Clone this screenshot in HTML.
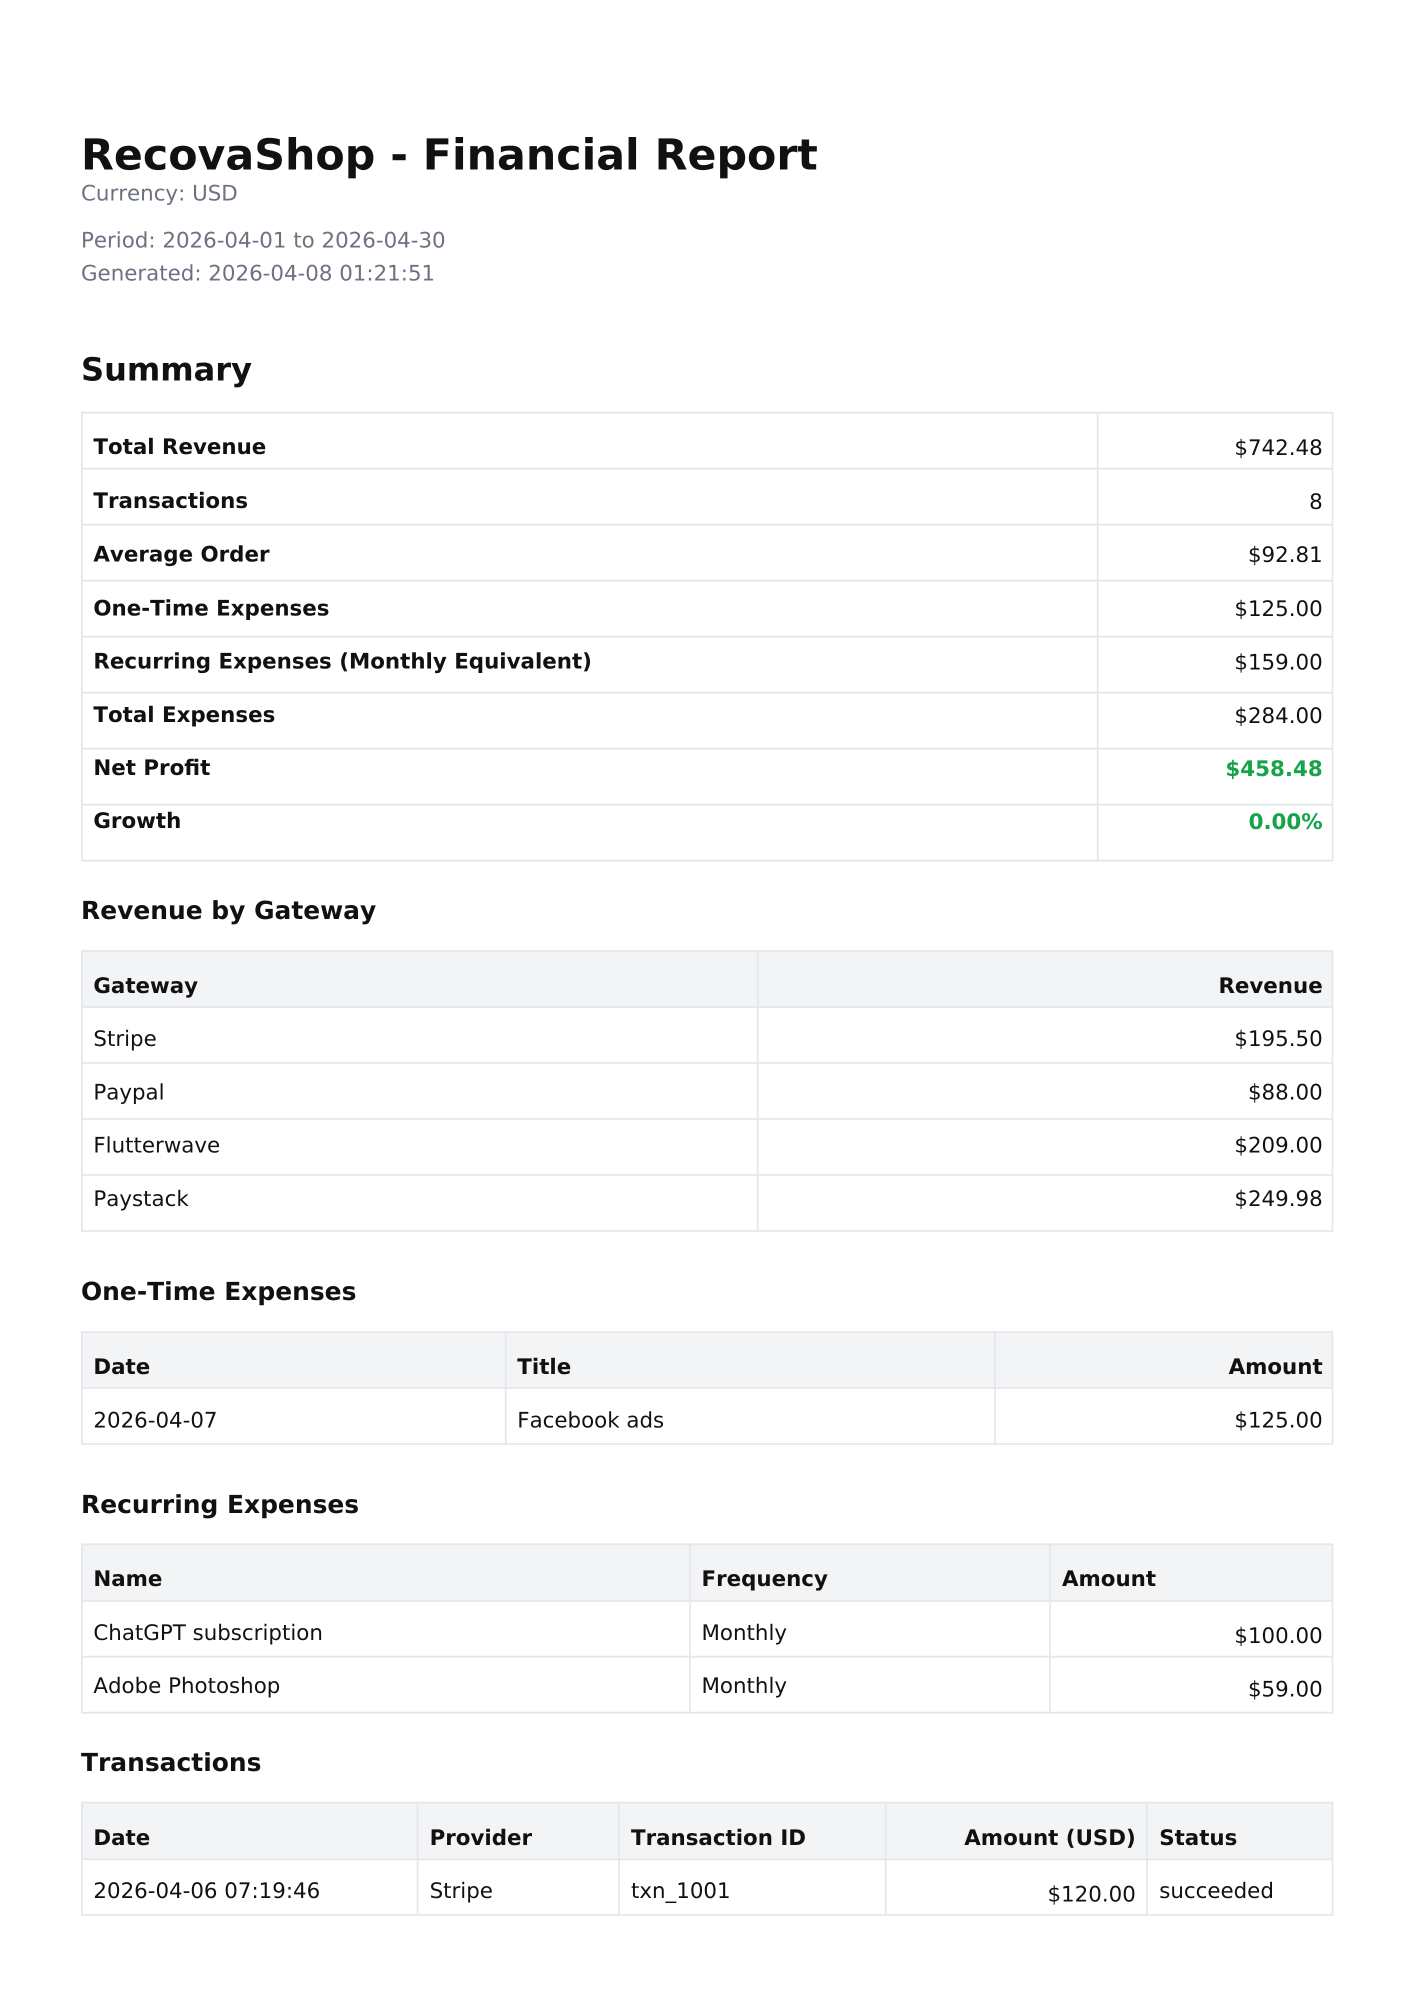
<!DOCTYPE html>
<html lang="en">
<head>
<meta charset="utf-8">
<title>RecovaShop - Financial Report</title>
<style>
html,body{margin:0;padding:0;background:#fff}
svg{display:block}
text{font-family:"DejaVu Sans",sans-serif;font-size:21.37px;fill:#111;text-rendering:geometricPrecision;font-kerning:none}
.b{font-weight:700}
.m{fill:#6b7280}
.r{text-anchor:end}
.g{fill:#16a34a;font-weight:700}
.h1{font-size:42.73px;font-weight:700}
.h2{font-size:32.05px;font-weight:700}
.h3{font-size:24.93px;font-weight:700}
.l{stroke:#e5e7eb;stroke-width:1.78;fill:none}
.th{fill:#f3f4f6}
</style>
</head>
<body>
<svg xmlns="http://www.w3.org/2000/svg" width="1414" height="2000" viewBox="0 0 1414 2000">
<rect width="1414" height="2000" fill="#fff"/>

<text class="h1" x="81" y="169.3">RecovaShop - Financial Report</text>
<text class="m" x="81" y="200.3">Currency: USD</text>
<text class="m" x="81" y="247.3">Period: 2026-04-01 to 2026-04-30</text>
<text class="m" x="81" y="280.7">Generated: 2026-04-08 01:21:51</text>
<text class="h2" x="81" y="380.4">Summary</text>

<path class="l" d="M81.9 412.7H1332.5V860.7H81.9ZM81 468.7H1333M81 524.7H1333M81 580.7H1333M81 636.7H1333M81 692.7H1333M81 748.7H1333M81 804.7H1333M1097.7 412V861"/>
<text class="b" x="93.4" y="454">Total Revenue</text>
<text class="b" x="93.4" y="508">Transactions</text>
<text class="b" x="93.4" y="561.3">Average Order</text>
<text class="b" x="93.4" y="615.3">One-Time Expenses</text>
<text class="b" x="93.4" y="668.4">Recurring Expenses (Monthly Equivalent)</text>
<text class="b" x="93.4" y="722">Total Expenses</text>
<text class="b" x="93.4" y="775.1">Net Profit</text>
<text class="b" x="93.4" y="828">Growth</text>
<text class="r" x="1322.7" y="455">$742.48</text>
<text class="r" x="1322.7" y="509">8</text>
<text class="r" x="1322.7" y="562">$92.81</text>
<text class="r" x="1322.7" y="616">$125.00</text>
<text class="r" x="1322.7" y="669.4">$159.00</text>
<text class="r" x="1322.7" y="723">$284.00</text>
<text class="r g" x="1322.7" y="776">$458.48</text>
<text class="r g" x="1322.7" y="829">0.00%</text>

<text class="h3" x="81" y="919">Revenue by Gateway</text>
<rect class="th" x="81.9" y="951" width="1250.6" height="56"/>
<path class="l" d="M81.9 951H1332.5V1231H81.9ZM81 1007H1333M81 1063H1333M81 1119H1333M81 1175H1333M757.7 950V1232"/>
<text class="b" x="93.4" y="992.8">Gateway</text>
<text class="b r" x="1322.7" y="992.8">Revenue</text>
<text x="93.4" y="1046">Stripe</text><text class="r" x="1322.7" y="1046">$195.50</text>
<text x="93.4" y="1099.7">Paypal</text><text class="r" x="1322.7" y="1099.7">$88.00</text>
<text x="93.4" y="1152.7">Flutterwave</text><text class="r" x="1322.7" y="1152.7">$209.00</text>
<text x="93.4" y="1206.2">Paystack</text><text class="r" x="1322.7" y="1206.2">$249.98</text>

<text class="h3" x="81" y="1300">One-Time Expenses</text>
<rect class="th" x="81.9" y="1332" width="1250.6" height="56"/>
<path class="l" d="M81.9 1332H1332.5V1444H81.9ZM81 1388H1333M505.7 1331V1445M995 1331V1445"/>
<text class="b" x="93.4" y="1374">Date</text>
<text class="b" x="517.3" y="1374">Title</text>
<text class="b r" x="1322.7" y="1374">Amount</text>
<text x="93.4" y="1427.3">2026-04-07</text>
<text x="517.3" y="1427.3">Facebook ads</text>
<text class="r" x="1322.7" y="1427.3">$125.00</text>

<text class="h3" x="81" y="1513">Recurring Expenses</text>
<rect class="th" x="81.9" y="1544.3" width="1250.6" height="56.7"/>
<path class="l" d="M81.9 1544.3H1332.5V1712.7H81.9ZM81 1601H1333M81 1656.7H1333M690 1543.5V1713.5M1050 1543.5V1713.5"/>
<text class="b" x="93.4" y="1586">Name</text>
<text class="b" x="701.5" y="1586">Frequency</text>
<text class="b" x="1062" y="1586">Amount</text>
<text x="93.4" y="1640">ChatGPT subscription</text>
<text x="701.5" y="1640">Monthly</text>
<text class="r" x="1322.7" y="1643">$100.00</text>
<text x="93.4" y="1692.8">Adobe Photoshop</text>
<text x="701.5" y="1692.8">Monthly</text>
<text class="r" x="1322.7" y="1696.5">$59.00</text>

<text class="h3" x="81" y="1771">Transactions</text>
<rect class="th" x="81.9" y="1802.7" width="1250.6" height="56.6"/>
<path class="l" d="M81.9 1802.7H1332.5V1915H81.9ZM81 1859.3H1333M417.6 1802V1916M619 1802V1916M885.7 1802V1916M1147 1802V1916"/>
<text class="b" x="93.4" y="1844.8">Date</text>
<text class="b" x="429.6" y="1844.8">Provider</text>
<text class="b" x="631" y="1844.8">Transaction ID</text>
<text class="b r" x="1135.8" y="1844.8">Amount (USD)</text>
<text class="b" x="1159.2" y="1844.8">Status</text>
<text x="93.4" y="1898">2026-04-06 07:19:46</text>
<text x="429.6" y="1898">Stripe</text>
<text x="631" y="1898">txn_1001</text>
<text class="r" x="1135.8" y="1901.6">$120.00</text>
<text x="1159.2" y="1898">succeeded</text>
</svg>
</body>
</html>
